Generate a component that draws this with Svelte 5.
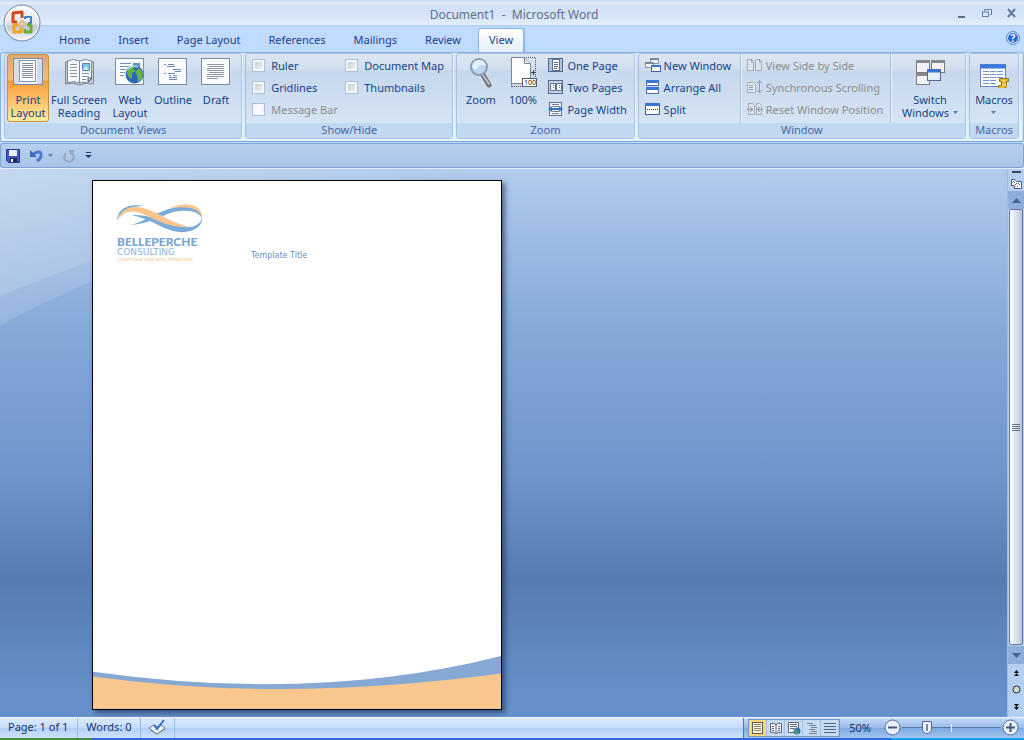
<script>
    // Вкладки ленты
    const tabs = ['Home', 'Insert', 'Page Layout', 'References', 'Mailings', 'Review', 'View'];
    let activeTab = $state('View');

    const documentViews = [
        { icon: 'print', lines: ['Print', 'Layout'] },
        { icon: 'reading', lines: ['Full Screen', 'Reading'] },
        { icon: 'web', lines: ['Web', 'Layout'] },
        { icon: 'outline', lines: ['Outline'] },
        { icon: 'draft', lines: ['Draft'] }
    ];
    let activeView = $state('print');

    let options = $state([
        { label: 'Ruler', checked: false },
        { label: 'Document Map', checked: false },
        { label: 'Gridlines', checked: false },
        { label: 'Thumbnails', checked: false },
        { label: 'Message Bar', checked: false, disabled: true }
    ]);

    const zoomItems = [
        { icon: 'onePage', label: 'One Page' },
        { icon: 'twoPages', label: 'Two Pages' },
        { icon: 'pageWidth', label: 'Page Width' }
    ];
    const windowItems = [
        { icon: 'newWindow', label: 'New Window' },
        { icon: 'arrange', label: 'Arrange All' },
        { icon: 'split', label: 'Split' }
    ];
    const compareItems = [
        { icon: 'sideBySide', label: 'View Side by Side' },
        { icon: 'sync', label: 'Synchronous Scrolling' },
        { icon: 'reset', label: 'Reset Window Position' }
    ];

    let slider = $state(22);
</script>

<!-- Большие иконки 32x32 -->
{#snippet bigIcon(name)}
    <svg class="big-icon" viewBox="0 0 32 32" width="32" height="32" aria-hidden="true">
        {#if name === 'print'}
            <rect x="1.500" y="2.500" width="29" height="26" fill="#f7f9fc" stroke="#7d8ba3" />
            <rect x="2" y="3" width="5" height="25" fill="#d3dceb" />
            <rect x="25" y="3" width="5" height="25" fill="#d3dceb" />
            <rect x="7.500" y="4.500" width="16" height="21" fill="#fff" stroke="#8793a8" />
            <path d="M10 7.500h11M10 9.500h11M10 11.500h11M10 13.500h11M10 15.500h11M10 17.500h11M10 19.500h11M10 21.500h11" stroke="#7d879b" />
        {:else if name === 'reading'}
            <path d="M2.500 6q7-3 14 0q7-3 14 0v22q-7-2-14 1q-7-3-14-1z" fill="#c4cad5" stroke="#7d8797" />
            <path d="M4.500 5q6-3 12 0v22q-6-3-12 0zM16.500 5q6-3 12 0v18l-4 4q-5-2-8 0z" fill="#fbfcff" stroke="#78859a" />
            <path d="M7 8.500h7M7 11.500h7M7 14.500h7M7 17.500h7M7 20.500h7M19 17.500h7M19 20.500h7M19 23.500h4" stroke="#8a93a2" />
            <path d="M19.500 7.500h7v7h-7z" fill="#84c0ee" stroke="#4d82c0" />
            <path d="M20 14l3-4l3 4z" fill="#d5eafa" />
            <path d="M25 26v-4h4z" fill="#d5dae2" stroke="#4e5663" />
        {:else if name === 'web'}
            <rect x="1.500" y="2.500" width="28" height="26" fill="#fafbff" stroke="#7f8ba1" />
            <path d="M6 7.500h11M6 10.500h9M6 13.500h6M6 16.500h5M6 19.500h4" stroke="#7891bd" />
            <rect x="19" y="7" width="7" height="5" fill="#5c93d2" />
            <circle cx="20.500" cy="18.500" r="9" fill="#2d64bf" />
            <path d="M13 14q3-5 8-4l-2 3l3 2l-4 2l0 5l-2 1l-3-5zM25 12l4 5-1 6-4 3-1-7-2-3z" fill="#63b347" />
            <path d="M14 13q4-4 10-2" fill="none" stroke="#c4e8f0" stroke-width="2" opacity=".7" />
        {:else if name === 'outline'}
            <rect x="1.500" y="2.500" width="28" height="26" fill="#fafbff" stroke="#7f8ba1" />
            <path d="M7 8.500h2M11 8.500h6M10 10.500h8M16 13.500h8M18 15.500h6M7 17.500h2M11 17.500h7M12 19.500h2M16 19.500h4M12 21.500h8M12 23.500h8" stroke="#7187b3" />
        {:else if name === 'draft'}
            <rect x="1.500" y="2.500" width="28" height="26" fill="#fafbff" stroke="#7f8ba1" />
            <path d="M7 8.500h17M9 10.500h15M7 12.500h17M7 14.500h17M9 16.500h15M7 18.500h17M7 20.500h17M7 22.500h11" stroke="#9098a6" />
        {:else if name === 'zoom'}
            <path d="M18 19l6 10" stroke="#716f76" stroke-width="5" stroke-linecap="round" />
            <path d="M18 19l6 9" stroke="#c6bfc1" stroke-width="2" stroke-linecap="round" />
            <circle cx="14" cy="11" r="8" fill="#b8d5f3" stroke="#8b9bae" stroke-width="2" />
            <path d="M7 10q1-6 7-6t7 6q-7-3-9 3q-4 1-5-3z" fill="#e4f0fc" />
        {:else if name === 'hundred'}
            <path d="M4.500 31V1.500h24V31" fill="none" stroke="#48566d" stroke-dasharray="1 1" />
            <path d="M5 30.500h24" stroke="#48566d" stroke-dasharray="1 1" />
            <path d="M4.500 1.500h13l6 6v20h-19z" fill="#fdfdff" stroke="#78859b" />
            <path d="M17.500 1.500v6h6" fill="#dbe2eb" stroke="#78859b" />
            <path d="M24 16.500h4M26.500 14v5" stroke="#37404d" />
            <rect x="15.500" y="22.500" width="14" height="8" fill="#fff" stroke="#565e6a" />
            <text x="17" y="29" class="tiny-text">100</text>
        {:else if name === 'switch'}
            <g fill="#f4f3f3" stroke="#7c7a7d">
                <rect x="2.500" y="4.500" width="13" height="12" />
                <rect x="17.500" y="4.500" width="13" height="12" />
                <rect x="2.500" y="17.500" width="13" height="11" />
            </g>
            <path d="M2 5.500h14M17 5.500h14M2 18.500h14" stroke="#88878a" stroke-width="3" />
            <rect x="13.500" y="13.500" width="13" height="11" fill="#e6f0fc" stroke="#526a96" />
            <path d="M14 15h12" stroke="#3974d9" stroke-width="3" />
        {:else if name === 'macros'}
            <rect x="2.500" y="8.500" width="25" height="22" fill="#fff" stroke="#6788bc" />
            <path d="M2 10.500h26" stroke="#3a79dc" stroke-width="4" />
            <path d="M5 15.500h20M5 18.500h20M5 21.500h20M5 24.500h14M5 27.500h14" stroke="#7296ca" stroke-dasharray="6 1" />
            <path d="M21.500 22.500h9v3h-2v4q0 3-3 3h-5v-3h3v-4h-2z" fill="#e9b62e" stroke="#9f7518" />
            <path d="M24 25h3M24 29h4" stroke="#fff0a3" />
        {/if}
    </svg>
{/snippet}

<!-- Маленькие иконки 16x16 -->
{#snippet smallIcon(name)}
    <svg class="small-icon" viewBox="0 0 16 16" width="16" height="16" aria-hidden="true">
        {#if name === 'onePage'}
            <rect x=".5" y="1.500" width="14" height="13" fill="#adc0dc" stroke="#53698c" />
            <rect x="4.500" y="2.500" width="7" height="11" fill="#fff" stroke="#60718e" />
            <path d="M6 5.500h4M6 7.500h4M6 9.500h4M6 11.500h3" stroke="#586984" />
        {:else if name === 'twoPages'}
            <rect x=".5" y="1.500" width="14" height="13" fill="#c1d1e6" stroke="#53698c" />
            <path d="M2.500 4.500h5v7h-5zM8.500 4.500h5v7h-5z" fill="#fff" stroke="#60718e" />
            <path d="M5 6.500h1M5 8.500h1M11 6.500h1M11 8.500h1" stroke="#586984" />
        {:else if name === 'pageWidth'}
            <rect x="1.500" y="1.500" width="12" height="13" fill="#f7f9ff" stroke="#617291" />
            <path d="M4 3.500h7M4 5.500h7M4 10.500h7M4 12.500h7" stroke="#737c8d" />
            <path d="M0 8l4-3v6zM15 8l-4-3v6z" fill="#356fc8" />
            <path d="M4 8h7" stroke="#356fc8" stroke-width="2" />
        {:else if name === 'newWindow'}
            <path d="M5.500 1.500h8v5h-8zM.5 5.500h8v5h-8z" fill="#f0f2f6" stroke="#8b94a3" />
            <path d="M5 2h9M0 6h9" stroke="#7e8998" stroke-width="2" />
            <rect x="6.500" y="8.500" width="9" height="6" fill="#fff" stroke="#415f94" />
            <path d="M6 9h10" stroke="#3478db" stroke-width="2" />
        {:else if name === 'arrange'}
            <path d="M1.500 1.500h12v5h-12zM1.500 8.500h12v6h-12z" fill="#fff" stroke="#4c6697" />
            <path d="M1 2.500h13M1 9.500h13" stroke="#3978d7" stroke-width="3" />
        {:else if name === 'split'}
            <rect x=".5" y="2.500" width="14" height="11" fill="#fff" stroke="#405f95" />
            <path d="M0 3.500h15" stroke="#3b76d7" stroke-width="3" />
            <path d="M2 8.500h12" stroke="#334359" stroke-dasharray="1 1" />
        {:else if name === 'sideBySide'}
            <path d="M.5 2.500h4l2 2v9h-6zM8.500 2.500h4l2 2v9h-6z" fill="#dfe4ec" stroke="#a5adb9" />
            <path d="M4.500 2v3h2M12.500 2v3h2" fill="none" stroke="#959eab" />
        {:else if name === 'sync'}
            <path d="M.5 3.500h6l2 2v8h-8z" fill="#e2e6ed" stroke="#a5adb9" />
            <path d="M2 6.500h4M2 8.500h4M2 10.500h4M12.500 2v11M10 4.500l2.500-3l2.500 3M10 11l2.500 3l2.500-3" fill="none" stroke="#929cac" />
        {:else if name === 'reset'}
            <path d="M1.500 2.500h4l2 2v9h-6zM9.500 2.500h3l2 2v9h-5z" fill="#dfe4ec" stroke="#a5adb9" />
            <path d="M0 8.500h6M3 6l3 2.500L3 11M16 8.500h-6M13 6l-3 2.500l3 2.500" fill="none" stroke="#8d98a8" />
        {:else if name === 'save'}
            <path d="M1.500 1.500h13v13h-11l-2-2z" fill="#4056c0" stroke="#293b91" />
            <path d="M4 2h8v6H4z" fill="#eaf0ff" />
            <path d="M5 10h7v4H5z" fill="#202747" />
            <path d="M6 11h2v3H6z" fill="#fff" />
        {:else if name === 'undo'}
            <path d="M4 6q7-4 8 0q1 4-4 7" fill="none" stroke="#4a7bd0" stroke-width="3" />
            <path d="M1 2v7h7z" fill="#3b69c2" />
        {:else if name === 'redo'}
            <path d="M5 5q-3 3-1 7q4 3 8 0q2-4-1-7" fill="none" stroke="#98a7c0" stroke-width="2" />
            <path d="M8 2h6L9 8z" fill="#98a7c0" />
        {:else if name === 'proof'}
            <path d="M0 9l5-3l3 2l4-2l4 3l-8 6z" fill="#f9fafc" stroke="#66728b" />
            <path d="M1 11l7 4l8-5" fill="none" stroke="#7c879d" />
            <path d="M5 6l3 4L15 1" fill="none" stroke="#3a6bc6" stroke-width="2" />
        {:else if name === 'statusPrint'}
            <rect x="2.500" y="2.500" width="10" height="11" fill="#fff7dc" stroke="#615a4c" />
            <path d="M4 4.500h7M4 6.500h7M4 8.500h7M4 10.500h7" stroke="#8a8272" />
        {:else if name === 'statusReading'}
            <path d="M2.500 3.500q3-1 5.500 1q3-2 5.500-1v9q-3-1-5.500 1q-3-2-5.500-1zM8 4v9M4 6.500h2M4 8.500h2M4 10.500h2M10 6.500h2M10 8.500h2M10 10.500h2" fill="#f5f7fa" stroke="#596473" />
        {:else if name === 'statusWeb'}
            <path d="M2.500 2.500h10v10h-10z" fill="#f7f9fc" stroke="#5c6878" />
            <path d="M4 4.500h7M4 6.500h7M4 8.500h4" stroke="#616c79" />
            <circle cx="11" cy="11" r="3.500" fill="#3971b5" />
            <path d="M8 10l3-2v3l2 3h-3z" fill="#4fa764" />
        {:else if name === 'statusOutline'}
            <path d="M3 3.500h6M5 5.500h7M7 7.500h6M5 9.500h6M7 11.500h6M5 13.500h8" stroke="#77808d" />
        {:else if name === 'statusDraft'}
            <path d="M2 3.500h12M2 6.500h12M2 9.500h12M2 12.500h12" stroke="#596473" />
        {/if}
    </svg>
{/snippet}

{#snippet arrow()}
    <svg class="arrow" viewBox="0 0 5 3" width="5" height="3" aria-hidden="true"><path d="M0 0h5L2.500 3z" fill="#567db1" /></svg>
{/snippet}

{#snippet command(item, disabled)}
    <button class="command" {disabled}>{@render smallIcon(item.icon)}{item.label}</button>
{/snippet}

<div class="window">
    <header class="title-bar">
        <h1>Document1&nbsp; -&nbsp; Microsoft Word</h1>
        <div class="window-buttons">
            <button aria-label="Minimize"><svg width="11" height="11" viewBox="0 0 11 11"><path d="M2 9h7" stroke="#596f8e" stroke-width="2" /></svg></button>
            <button aria-label="Restore"><svg width="11" height="11" viewBox="0 0 11 11"><path d="M3.500 3V1.500h7v5H9M1 4h7M1.500 4v4.500h6V4" fill="none" stroke="#65799a" /></svg></button>
            <button aria-label="Close"><svg width="11" height="11" viewBox="0 0 11 11"><path d="M2 1l7 8M9 1L2 9" stroke="#65799a" stroke-width="2" /></svg></button>
        </div>
        <button class="office" aria-label="Office Button">
            <svg width="38" height="38" viewBox="0 0 38 38">
                <defs>
                    <linearGradient id="orb" x2="0" y2="1">
                        <stop offset="0" stop-color="#fff" />
                        <stop offset=".5" stop-color="#e3e6ec" />
                        <stop offset=".6" stop-color="#c3c9d4" />
                        <stop offset="1" stop-color="#f5f7fc" />
                    </linearGradient>
                </defs>
                <circle cx="19" cy="19" r="18" fill="url(#orb)" stroke="#76849b" />
                <circle cx="19" cy="19" r="16.500" fill="none" stroke="#fff" opacity=".8" />
                <g fill="none" stroke-linejoin="round">
                    <path d="M14 18h-4V9l9-1v6" stroke="#d9481d" stroke-width="3" />
                    <path d="M22 15v-2h6v6h-3" stroke="#3f82cc" stroke-width="2" />
                    <path d="M15 21h-4v7h7v-4" stroke="#f3a51d" stroke-width="3" />
                    <path d="M22 25v3h6v-7h-4" stroke="#70ac37" stroke-width="3" />
                    <path d="M15 19h3v-3M20 16v3h4M20 24v-3h3M15 21h3v3" stroke="#efa04a" />
                </g>
            </svg>
        </button>
    </header>

    <nav class="tabs">
        {#each tabs as tab}
            <button class="tab" class:active={tab === activeTab} onclick={() => (activeTab = tab)}>{tab}</button>
        {/each}
        <button class="help" aria-label="Help">?</button>
    </nav>

    <div class="ribbon">
        <section class="group">
            <div class="group-body views">
                {#each documentViews as view}
                    <button class="big" class:selected={view.icon === activeView} onclick={() => (activeView = view.icon)}>
                        {@render bigIcon(view.icon)}
                        {#each view.lines as line}<span>{line}</span>{/each}
                    </button>
                {/each}
            </div>
            <h2>Document Views</h2>
        </section>

        <section class="group">
            <div class="group-body options">
                {#each options as option}
                    <label class:disabled={option.disabled}>
                        <input type="checkbox" bind:checked={option.checked} disabled={option.disabled} />
                        {option.label}
                    </label>
                {/each}
            </div>
            <h2>Show/Hide</h2>
        </section>

        <section class="group">
            <div class="group-body zoom-body">
                <button class="big">{@render bigIcon('zoom')}<span>Zoom</span></button>
                <button class="big">{@render bigIcon('hundred')}<span>100%</span></button>
                <div class="commands">
                    {#each zoomItems as item}{@render command(item, false)}{/each}
                </div>
            </div>
            <h2>Zoom</h2>
        </section>

        <section class="group">
            <div class="group-body window-body">
                <div class="commands">
                    {#each windowItems as item}{@render command(item, false)}{/each}
                </div>
                <div class="commands divided">
                    {#each compareItems as item}{@render command(item, true)}{/each}
                </div>
                <button class="big">
                    {@render bigIcon('switch')}
                    <span>Switch</span>
                    <span>Windows {@render arrow()}</span>
                </button>
            </div>
            <h2>Window</h2>
        </section>

        <section class="group">
            <div class="group-body macros-body">
                <button class="big">{@render bigIcon('macros')}<span>Macros</span><span>{@render arrow()}</span></button>
            </div>
            <h2>Macros</h2>
        </section>
    </div>

    <div class="quick-access">
        <button aria-label="Save">{@render smallIcon('save')}</button>
        <button aria-label="Undo">{@render smallIcon('undo')}{@render arrow()}</button>
        <button aria-label="Repeat">{@render smallIcon('redo')}</button>
        <button aria-label="Customize Quick Access Toolbar">
            <svg width="7" height="7" viewBox="0 0 7 7"><path d="M1 .5h5" stroke="#1d3b72" /><path d="M0 3h7L3.500 6z" fill="#1d3b72" /></svg>
        </button>
    </div>

    <main class="workspace">
        <!-- Светлая волна на фоне рабочей области -->
        <svg class="swoosh" viewBox="0 0 500 160" width="500" height="160" aria-hidden="true">
            <defs>
                <linearGradient id="wave" x2="1" y2="0">
                    <stop offset="0" stop-color="#fff" stop-opacity=".14" />
                    <stop offset="1" stop-color="#fff" stop-opacity="0" />
                </linearGradient>
            </defs>
            <path d="M0 0H500Q220 35 0 127z" fill="url(#wave)" />
            <path d="M0 0H500Q220 40 0 156z" fill="url(#wave)" />
        </svg>
        <article class="page">
            <svg class="logo" viewBox="0 0 88 60" width="88" height="60" role="img" aria-label="Belleperche Consulting">
                <path d="M0 17C0 4 12-1 28 2C18 2 4 4 0 17z" fill="#7ba9d8" />
                <path d="M14 21C28 17 38 9 52 5C70 0 86 4 85 15C83 7 70 5 56 8C42 13 30 20 14 21z" fill="#7ba9d8" />
                <path d="M14 11C30 10 46 16 58 21C70 25 82 24 85 14C86 24 72 31 56 27C42 23 34 15 14 11z" fill="#7ba9d8" />
                <path d="M1 17C3 5 14 1 26 4C42 8 55 20 73 23C56 24 42 18 30 12C18 5 6 6 1 17z" fill="#f9c58d" />
                <path d="M53 4C66-2 86-1 85 14C83 3 68 2 53 4z" fill="#f9c58d" />
                <text x="0" y="42" class="logo-name">BELLEPERCHE</text>
                <text x="0" y="51" class="logo-sub">CONSULTING</text>
                <text x="0" y="57" class="logo-tag">CHART YOUR OWN PATH. TRANSCEND.</text>
            </svg>
            <p class="template-title">Template Title</p>
            <svg class="footer-wave" viewBox="0 0 408 54" preserveAspectRatio="none" aria-hidden="true">
                <path d="M0 16Q224 48 408 0V54H0z" fill="#85a9d3" />
                <path d="M0 21Q190 48 408 18V54H0z" fill="#fac88f" />
            </svg>
        </article>

        <div class="scrollbar">
            <span class="splitter"></span>
            <button aria-label="View Ruler"><svg width="13" height="13" viewBox="0 0 13 13"><path d="M1.500 2.500h3l2 2h5v7h-7v-3h-3z" fill="#fff" stroke="#4e5c73" /><path d="M3 4l2 2M5 8l2-2M8 6l2 2M7 10l1-1" stroke="#4e5c73" /></svg></button>
            <button class="step" aria-label="Scroll up"><svg width="9" height="5" viewBox="0 0 9 5"><path d="M0 5h9L4.500 0z" fill="#4c638b" /></svg></button>
            <div class="thumb"><i></i><i></i><i></i><i></i></div>
            <button class="step" aria-label="Scroll down"><svg width="9" height="5" viewBox="0 0 9 5"><path d="M0 0h9L4.500 5z" fill="#4c638b" /></svg></button>
            <button class="browse" aria-label="Previous page"><svg width="5" height="6" viewBox="0 0 5 6"><path d="M0 3h5L2.500 0zM0 6h5L2.500 3z" fill="#111" /></svg></button>
            <button class="browse" aria-label="Select browse object"><svg width="9" height="9" viewBox="0 0 9 9"><circle cx="4.500" cy="4.500" r="3.500" fill="#d4d6c8" stroke="#252b34" /></svg></button>
            <button class="browse" aria-label="Next page"><svg width="5" height="6" viewBox="0 0 5 6"><path d="M0 0h5L2.500 3zM0 3h5L2.500 6z" fill="#111" /></svg></button>
        </div>
    </main>

    <footer class="status">
        <button>Page: 1 of 1</button>
        <button>Words: 0</button>
        <button aria-label="Proofing">{@render smallIcon('proof')}</button>
        <div class="status-right">
            <div class="view-switch">
                <button class="on" aria-label="Print Layout">{@render smallIcon('statusPrint')}</button>
                <button aria-label="Full Screen Reading">{@render smallIcon('statusReading')}</button>
                <button aria-label="Web Layout">{@render smallIcon('statusWeb')}</button>
                <button aria-label="Outline">{@render smallIcon('statusOutline')}</button>
                <button aria-label="Draft">{@render smallIcon('statusDraft')}</button>
            </div>
            <button class="percent">50%</button>
            <button class="round" aria-label="Zoom out"><svg width="17" height="17" viewBox="0 0 17 17"><circle cx="8.500" cy="8.500" r="7.500" fill="#e9f0fa" stroke="#506e9c" /><path d="M4 8.500h9" stroke="#45587b" stroke-width="2" /></svg></button>
            <input type="range" min="0" max="100" bind:value={slider} aria-label="Zoom level" />
            <button class="round" aria-label="Zoom in"><svg width="17" height="17" viewBox="0 0 17 17"><circle cx="8.500" cy="8.500" r="7.500" fill="#e9f0fa" stroke="#506e9c" /><path d="M4 8.500h9M8.500 4v9" stroke="#45587b" stroke-width="2" /></svg></button>
        </div>
    </footer>
    <div class="taskbar"></div>
</div>

<style>
    :global(body) {
        margin: 0;
        overflow: hidden;
    }

    .window {
        display: flex;
        flex-direction: column;
        height: 100vh;
        background: #bfdbff;
        color: #15428b;
        font-family: 'Noto Sans', 'Open Sans', sans-serif;
        font-size: 11px;
        line-height: 13px;
    }

    button {
        display: flex;
        align-items: center;
        justify-content: center;
        padding: 0;
        border: 0;
        background: none;
        color: inherit;
        font: inherit;
        white-space: nowrap;
    }

    svg {
        display: block;
        flex: none;
    }

    h1, h2, p {
        margin: 0;
        font-weight: normal;
    }

    /* Заголовок окна */
    .title-bar {
        position: relative;
        display: flex;
        align-items: center;
        justify-content: center;
        flex: none;
        height: 26px;
        padding: 4px 0 0 4px;
        box-sizing: border-box;
        border-bottom: 1px solid #aecaf0;
        background: linear-gradient(#c8dcf7, #e3ebf6 3px, #d2e2f7 6px, #d7e6f9 18px, #e6effb);
    }

    h1 {
        color: #5c6f8e;
        font-size: 12px;
        line-height: 16px;
    }

    .window-buttons {
        position: absolute;
        top: 8px;
        right: 7px;
        display: flex;
        gap: 14px;
    }

    .office {
        position: absolute;
        top: 4px;
        left: 3px;
        z-index: 2;
        border-radius: 50%;
    }

    .tabs {
        display: flex;
        gap: 6px;
        flex: none;
        height: 26px;
        padding: 2px 3px 0 48px;
        box-sizing: border-box;
    }

    .tab {
        padding: 0 10px 2px;
        border: 1px solid transparent;
        border-bottom: 0;
        border-radius: 3px 3px 0 0;
    }

    .tab.active {
        border-color: #8db2e3;
        background: linear-gradient(#fff, #e5effb);
        box-shadow: 1px 0 1px #91b7e9;
    }

    .help {
        width: 14px;
        height: 14px;
        margin: 3px 1px 0 auto;
        border: 1px solid #6b92d0;
        border-radius: 50%;
        background: #2869d8;
        box-shadow: inset 0 0 0 1px #fff;
        color: #fff;
        font-size: 10px;
        font-weight: bold;
    }

    /* Лента */
    .ribbon {
        display: grid;
        grid-template-columns: 238fr 208fr 178fr 328fr 50fr;
        gap: 3px;
        flex: none;
        padding: 0 4px 2px 3px;
        border: 1px solid #8db2e3;
        border-bottom-color: #7fa6da;
        border-radius: 3px;
        background: linear-gradient(#dbe6f4, #cfdded 16px, #c9d9ed 17px, #e0f4fd);
    }

    .group {
        min-width: 0;
        border: 1px solid #a7c3e1;
        border-radius: 3px;
        background: linear-gradient(#dce6f3, #d0deef 16px, #c7d8ed 17px, #dae8f7);
        box-shadow: 1px 1px 0 #eef6ff;
        overflow: hidden;
    }

    h2 {
        height: 15px;
        background: #c1d8f1;
        color: #4669a5;
        font-size: 11px;
        line-height: 14px;
        text-align: center;
    }

    .group-body {
        display: flex;
        height: 69px;
        box-sizing: border-box;
    }

    .big {
        flex-direction: column;
        justify-content: flex-start;
        padding: 1px 1px 0;
        border: 1px solid transparent;
        border-radius: 3px;
        box-sizing: border-box;
    }

    .big-icon {
        margin-bottom: 5px;
    }

    .big span {
        display: flex;
        align-items: center;
        gap: 4px;
        min-height: 13px;
    }

    .big.selected {
        border-color: #c2943f;
        background: linear-gradient(#dfa873, #f5bc78 25px, #fc9d3a 26px, #fdd98a 58px, #fff0a0);
    }

    .views {
        display: grid;
        grid-template-columns: 42px 60px 42px 44px 42px;
        padding: 0 2px 1px;
    }

    .options {
        display: grid;
        grid-template-columns: 93px 1fr;
        grid-auto-rows: 22px;
        padding: 0 0 0 6px;
    }

    label {
        display: flex;
        align-items: center;
        gap: 6px;
        white-space: nowrap;
    }

    label.disabled, .command:disabled {
        color: #8d8d8d;
    }

    input[type='checkbox'] {
        appearance: none;
        width: 13px;
        height: 13px;
        margin: 0;
        border: 1px solid #abc1de;
        background: linear-gradient(135deg, #bfc5cd, #f8f8f8);
        box-shadow: inset 0 0 0 2px #f3f6fa;
    }

    input[type='checkbox']:checked {
        background: #4b75b3;
    }

    input[type='checkbox']:disabled {
        background: #f8fafc;
    }

    .commands {
        display: flex;
        flex-direction: column;
    }

    .command {
        justify-content: flex-start;
        gap: 3px;
        height: 22px;
    }

    .zoom-body {
        padding: 0 4px 1px;
        gap: 3px;
    }

    .zoom-body .big {
        width: 39px;
    }

    .zoom-body .commands {
        margin-left: 3px;
    }

    .window-body {
        justify-content: space-between;
        padding: 0 5px 0 6px;
    }

    .window-body .divided {
        padding: 0 7px 0 6px;
        border-left: 1px solid #a3bfdf;
        border-right: 1px solid #a3bfdf;
        box-shadow: inset 1px 0 #eef5fd, 1px 0 #eef5fd;
    }

    .macros-body {
        justify-content: center;
    }

    /* Панель быстрого доступа */
    .quick-access {
        display: flex;
        align-items: center;
        gap: 8px;
        flex: none;
        height: 25px;
        margin-top: 1px;
        padding: 0 4px;
        box-sizing: border-box;
        border: 1px solid #7fa4d4;
        border-radius: 3px;
        background: linear-gradient(#b8d0ef, #a8c4e9);
    }

    .quick-access button {
        gap: 3px;
    }

    /* Рабочая область */
    .workspace {
        position: relative;
        display: flex;
        align-items: flex-start;
        justify-content: space-between;
        flex: 1;
        min-height: 0;
        padding-left: 92px;
        border-top: 1px solid #e1efff;
        background: linear-gradient(#b0cbec, #84a8d8 30%, #6f96ca 55%, #567db1 75%, #6690cb 97%, #6690cb);
        overflow: hidden;
    }

    .swoosh {
        position: absolute;
        top: 0;
        left: 0;
    }

    .page {
        position: relative;
        width: 410px;
        aspect-ratio: 410 / 530;
        margin-top: 11px;
        padding: 23px 24px;
        box-sizing: border-box;
        border: 1px solid #000;
        background: #fff;
        box-shadow: 3px 3px 5px rgba(20, 40, 80, 0.6);
        display: flex;
        align-items: flex-start;
        gap: 46px;
    }

    .logo-name {
        fill: #79a6d6;
        font: 900 12px Lato, sans-serif;
    }

    .logo-sub {
        fill: #8db3dd;
        font: 9px 'DejaVu Sans', sans-serif;
    }

    .logo-tag {
        fill: #f6c08a;
        font: 4px 'DejaVu Sans', sans-serif;
    }

    .template-title {
        padding-top: 46px;
        color: #6793c4;
        font-family: 'DejaVu Sans', sans-serif;
        font-size: 8px;
        line-height: 12px;
    }

    .footer-wave {
        position: absolute;
        right: 0;
        bottom: 0;
        left: 0;
        width: 100%;
        height: 10%;
    }

    .tiny-text {
        fill: #222;
        font: 7px 'Noto Sans', sans-serif;
    }

    .scrollbar {
        position: relative;
        display: flex;
        flex-direction: column;
        align-items: center;
        align-self: stretch;
        width: 17px;
        padding-bottom: 2px;
        box-sizing: border-box;
        border-left: 1px solid #9dbce3;
        background: #b5cff2;
    }

    .splitter {
        width: 9px;
        height: 2px;
        margin: 2px 0 4px;
        background: #3b4656;
    }

    .step {
        width: 16px;
        height: 18px;
        margin-top: 1px;
        background: #90aedb;
    }

    .thumb {
        display: flex;
        flex: 1;
        flex-direction: column;
        align-items: center;
        justify-content: center;
        gap: 1px;
        width: 14px;
        box-sizing: border-box;
        border: 1px solid #65789a;
        border-radius: 2px;
        background: linear-gradient(90deg, #fff, #d5dde9 60%, #b7c5da);
    }

    .thumb i {
        width: 8px;
        height: 1px;
        background: #67758c;
    }

    .browse {
        height: 17px;
    }

    /* Строка состояния */
    .status {
        display: flex;
        flex: none;
        height: 21px;
        border-top: 1px solid #f1f7ff;
        box-sizing: border-box;
        background: linear-gradient(#dceaff, #c4dbfc 50%, #b0cff7 51%, #cfe2fc);
        color: #15326b;
    }

    .status > button {
        padding: 0 9px 3px 8px;
        border-right: 1px solid #9bbbe3;
    }

    .status-right {
        display: flex;
        align-items: center;
        margin-left: auto;
        padding: 0 4px 1px;
        border-left: 1px solid #4c78b8;
        background: linear-gradient(#c5dbf8, #96b9e8 50%, #7fa9e2 51%, #a3c5f1);
    }

    .view-switch {
        display: flex;
        border: 1px solid #7398ca;
        background: #c5daf5;
    }

    .view-switch button {
        width: 18px;
        height: 16px;
        box-sizing: border-box;
        border-right: 1px solid #a8c1e0;
    }

    .view-switch .on {
        background: #ffd47d;
    }

    .percent {
        width: 43px;
        padding: 0 3px 1px 0;
        box-sizing: border-box;
    }

    .round {
        width: 19px;
    }

    input[type='range'] {
        appearance: none;
        width: 99px;
        height: 15px;
        margin: 0;
        background: linear-gradient(#eef5ff, #eef5ff) center / 1px 8px no-repeat, linear-gradient(#5676a5, #5676a5) center / 100% 1px no-repeat;
    }

    input[type='range']::-webkit-slider-thumb {
        appearance: none;
        width: 10px;
        height: 13px;
        box-sizing: border-box;
        border: 1px solid #526b94;
        border-radius: 1px 1px 5px 5px;
        background: linear-gradient(#7189ae, #7189ae) center / 2px 7px no-repeat, #eef3fa;
    }

    .taskbar {
        flex: none;
        height: 2px;
        background: linear-gradient(90deg, #3f9142 9%, #2d68dc 9%, #2d68dc 87%, #16a2e8 87%);
    }
</style>
